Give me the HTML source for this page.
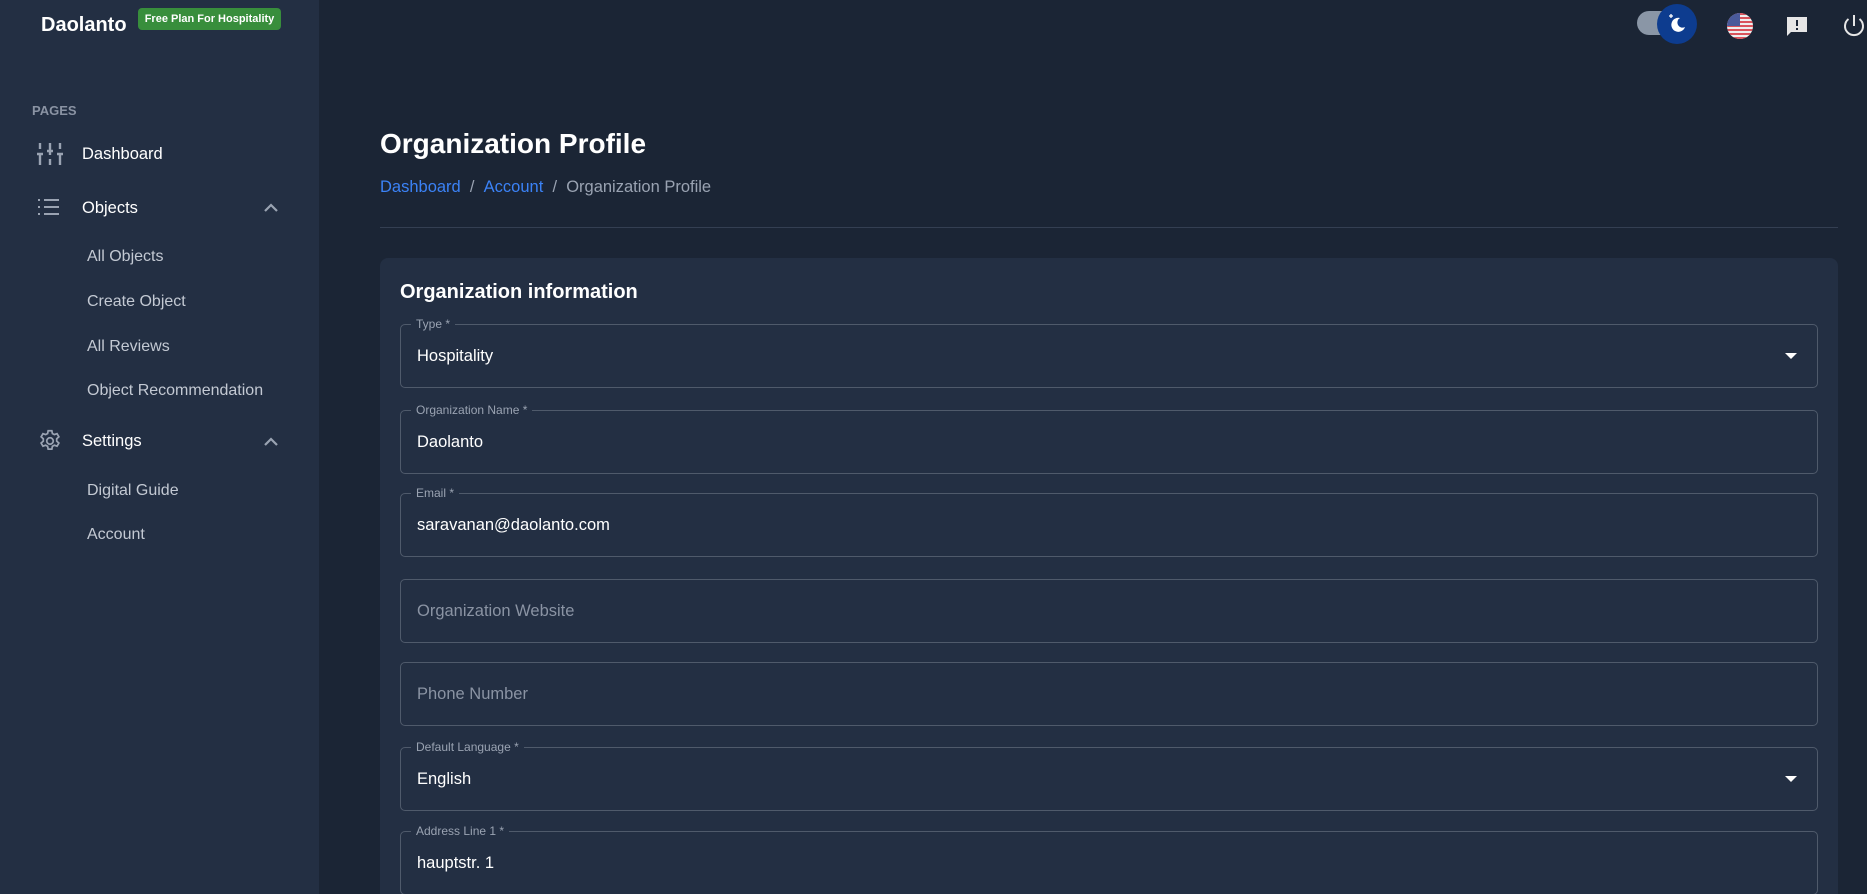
<!DOCTYPE html>
<html><head><meta charset="utf-8"><style>
*{box-sizing:border-box;margin:0;padding:0}
html{width:1867px;height:894px;overflow:hidden}
body{width:1867px;height:894px;overflow:hidden;background:#1b2535;font-family:"Liberation Sans",sans-serif;color:#fff;position:relative}
.sb{position:absolute;left:0;top:0;width:319px;height:894px;background:#232f43}
.abs{position:absolute;white-space:nowrap}
.logo{left:41px;top:14px;font-size:20px;font-weight:bold}
.badge{left:138px;top:8px;width:143px;height:22px;background:#388e3c;border-radius:4px;font-size:11px;font-weight:bold;text-align:center;line-height:22px}
.pages{left:32px;top:103px;font-size:13px;font-weight:bold;color:#8a93a3}
.nav{font-size:16.5px;color:#fff}
.sub{font-size:16px;color:#c3c9d3}
.main-t{left:380px;top:128px;font-size:28px;font-weight:bold}
.bc{left:380px;top:178px;font-size:16.5px;color:#9aa3b2}
.bc a{color:#3b82f6;text-decoration:none}
.div{position:absolute;left:380px;top:227px;width:1458px;height:1px;background:#343f52}
.card{position:absolute;left:380px;top:258px;width:1458px;height:636px;background:#232f43;border-radius:8px 8px 0 0}
.ct{left:400px;top:281px;font-size:20px;font-weight:bold}
.f{position:absolute;left:400px;width:1418px;height:64px;border:1px solid #4f5a6b;border-radius:5px}
.f .l{position:absolute;left:10px;top:-8px;padding:0 5px;background:#232f43;font-size:12px;color:#9aa3b2}
.f .v{position:absolute;left:16px;top:22px;font-size:16.5px;color:#fff}
.f .p{color:#8a93a3}
.f .arr{position:absolute;right:20px;top:28px;width:0;height:0;border-left:6px solid transparent;border-right:6px solid transparent;border-top:6px solid #fff}
</style></head><body>
<div class="sb"></div>
<div class="abs logo">Daolanto</div>
<div class="abs badge">Free Plan For Hospitality</div>
<div class="abs pages">PAGES</div>
<svg class="abs" style="left:37px;top:141px" width="26" height="26" viewBox="0 0 26 26" stroke="#9aa3b2" stroke-width="2.4" fill="none"><path d="M3 2v6M3 13v11M0 13h6M13 2v12M13 18v6M10 10h6M23 2v6M23 13v11M20 13h6"/></svg>
<div class="abs nav" style="left:82px;top:145px">Dashboard</div>
<svg class="abs" style="left:38px;top:198px" width="24" height="18" viewBox="0 0 24 18" fill="#9aa3b2"><rect x="0" y="1" width="2" height="2"/><rect x="0" y="8" width="2" height="2"/><rect x="0" y="15" width="2" height="2"/><rect x="6" y="1" width="15" height="2"/><rect x="6" y="8" width="15" height="2"/><rect x="6" y="15" width="15" height="2"/></svg>
<div class="abs nav" style="left:82px;top:199px">Objects</div>
<svg class="abs" style="left:264px;top:203px" width="14" height="9" viewBox="0 0 14 9"><path d="M1 8l6-6 6 6" stroke="#9aa3b2" stroke-width="2.2" fill="none"/></svg>
<div class="abs sub" style="left:87px;top:248px">All Objects</div>
<div class="abs sub" style="left:87px;top:293px">Create Object</div>
<div class="abs sub" style="left:87px;top:338px">All Reviews</div>
<div class="abs sub" style="left:87px;top:382px">Object Recommendation</div>
<svg class="abs" style="left:37px;top:428px" width="26" height="26" viewBox="0 0 24 24" fill="none" stroke="#9aa3b2" stroke-width="1.6"><circle cx="12" cy="12" r="3"/><path d="M10.3 2.5h3.4l.5 2.6 1.8 1 2.5-.9 1.7 2.9-2 1.8v2.2l2 1.8-1.7 2.9-2.5-.9-1.8 1-.5 2.6h-3.4l-.5-2.6-1.8-1-2.5.9-1.7-2.9 2-1.8v-2.2l-2-1.8 1.7-2.9 2.5.9 1.8-1z"/></svg>
<div class="abs nav" style="left:82px;top:432px">Settings</div>
<svg class="abs" style="left:264px;top:437px" width="14" height="9" viewBox="0 0 14 9"><path d="M1 8l6-6 6 6" stroke="#9aa3b2" stroke-width="2.2" fill="none"/></svg>
<div class="abs sub" style="left:87px;top:482px">Digital Guide</div>
<div class="abs sub" style="left:87px;top:526px">Account</div>

<div class="abs" style="left:1637px;top:11px;width:50px;height:24px;border-radius:12px;background:#8a96a6"></div>
<div class="abs" style="left:1657px;top:4px;width:40px;height:40px;border-radius:50%;background:#0d3c8f"></div>
<svg class="abs" style="left:1665px;top:12px" width="24" height="24" viewBox="0 0 24 24"><path d="M15 6a7 7 0 1 0 5 9 5 5 0 0 1-5-9z" fill="#fff"/><path d="M6 2v4M4 4h4" stroke="#fff" stroke-width="1.3"/></svg>
<svg class="abs" style="left:1726px;top:12px" width="28" height="28" viewBox="0 0 28 28"><defs><clipPath id="c"><circle cx="14" cy="14" r="13"/></clipPath></defs><g clip-path="url(#c)"><rect width="28" height="28" fill="#eee"/><rect y="1" width="28" height="2" fill="#d9535b"/><rect y="5" width="28" height="2" fill="#d9535b"/><rect y="9" width="28" height="2" fill="#d9535b"/><rect y="13" width="28" height="2" fill="#d9535b"/><rect y="17" width="28" height="2" fill="#d9535b"/><rect y="21" width="28" height="2" fill="#d9535b"/><rect y="25" width="28" height="2" fill="#d9535b"/><rect width="14" height="14" fill="#4a5a9a"/></g></svg>
<svg class="abs" style="left:1785px;top:14px" width="24" height="24" viewBox="0 0 24 24"><path d="M2 3h20v15H6l-4 4z" fill="#e6e6e6"/><rect x="11" y="6" width="2" height="6" fill="#1b2535"/><rect x="11" y="14" width="2" height="2" fill="#1b2535"/></svg>
<svg class="abs" style="left:1841px;top:13px" width="26" height="26" viewBox="0 0 26 26" fill="none" stroke="#e6e6e6" stroke-width="2"><path d="M13 2v11"/><path d="M7.5 6a9 9 0 1 0 11 0"/></svg>

<div class="abs main-t">Organization Profile</div>
<div class="abs bc"><a>Dashboard</a>&nbsp;&nbsp;/&nbsp;&nbsp;<a>Account</a>&nbsp;&nbsp;/&nbsp;&nbsp;Organization Profile</div>
<div class="div"></div>
<div class="card"></div>
<div class="abs ct">Organization information</div>

<div class="f" style="top:324px"><span class="l">Type *</span><span class="v">Hospitality</span><span class="arr"></span></div>
<div class="f" style="top:410px"><span class="l">Organization Name *</span><span class="v">Daolanto</span></div>
<div class="f" style="top:493px"><span class="l">Email *</span><span class="v">saravanan@daolanto.com</span></div>
<div class="f" style="top:579px"><span class="v p">Organization Website</span></div>
<div class="f" style="top:662px"><span class="v p">Phone Number</span></div>
<div class="f" style="top:747px"><span class="l">Default Language *</span><span class="v">English</span><span class="arr"></span></div>
<div class="f" style="top:831px"><span class="l">Address Line 1 *</span><span class="v">hauptstr. 1</span></div>
</body></html>
